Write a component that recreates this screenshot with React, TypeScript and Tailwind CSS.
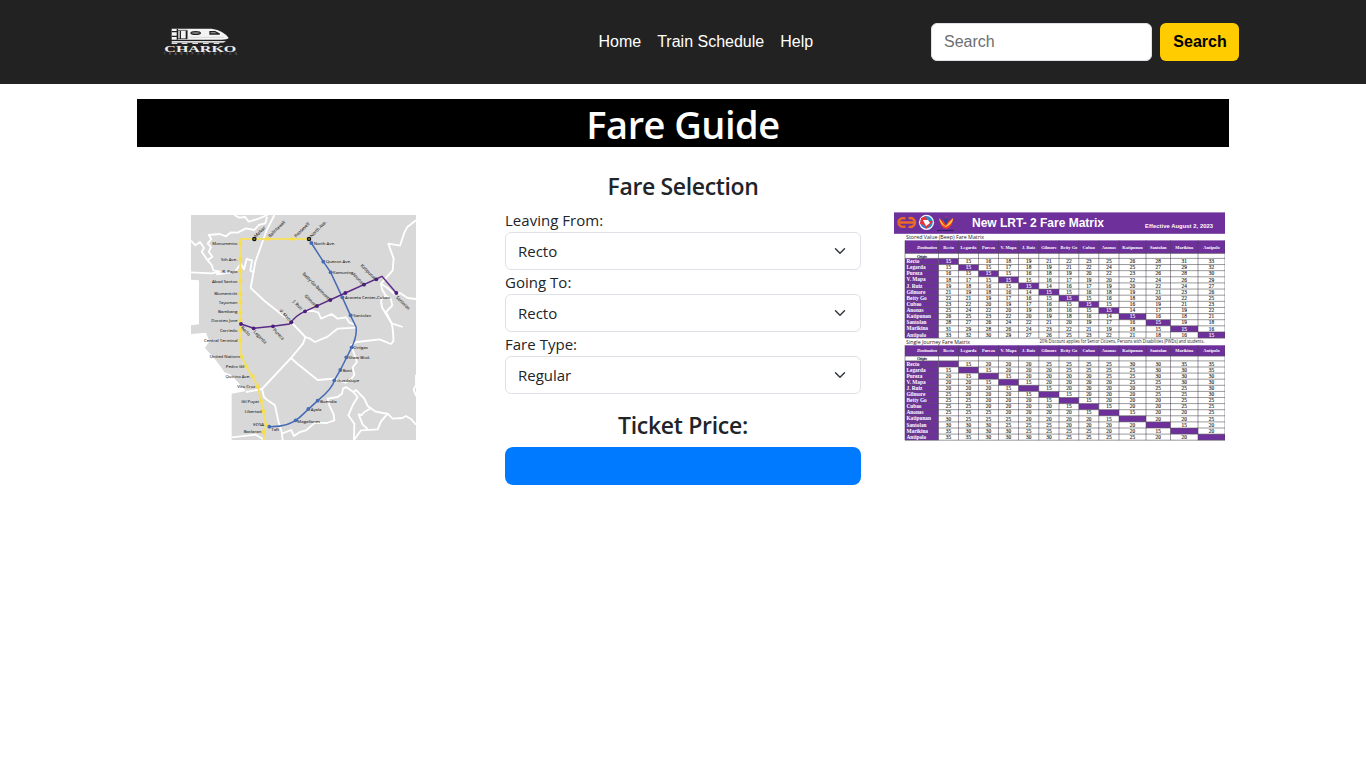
import React from "react";

const stations = ["Recto", "Legarda", "Pureza", "V. Mapa", "J. Ruiz", "Gilmore", "Betty Go", "Cubao", "Anonas", "Katipunan", "Santolan", "Marikina", "Antipolo"];

const storedValue = [
  [15, 15, 16, 18, 19, 21, 22, 23, 25, 26, 28, 31, 33],
  [15, 15, 15, 17, 18, 19, 21, 22, 24, 25, 27, 29, 32],
  [16, 15, 15, 15, 16, 18, 19, 20, 22, 23, 26, 28, 30],
  [18, 17, 15, 15, 15, 16, 17, 19, 20, 22, 24, 26, 29],
  [19, 18, 16, 15, 15, 14, 16, 17, 19, 20, 22, 24, 27],
  [21, 19, 18, 16, 14, 15, 15, 16, 18, 19, 21, 23, 26],
  [22, 21, 19, 17, 16, 15, 15, 15, 16, 18, 20, 22, 25],
  [23, 22, 20, 19, 17, 16, 15, 15, 15, 16, 19, 21, 23],
  [25, 24, 22, 20, 19, 18, 16, 15, 15, 14, 17, 19, 22],
  [26, 25, 23, 22, 20, 19, 18, 16, 14, 15, 16, 18, 21],
  [28, 27, 26, 24, 22, 21, 20, 19, 17, 16, 15, 19, 18],
  [31, 29, 28, 26, 24, 23, 22, 21, 19, 18, 15, 15, 16],
  [33, 32, 30, 29, 27, 26, 25, 23, 22, 21, 18, 16, 15],
];

const singleJourney = [
  [0, 15, 20, 20, 20, 25, 25, 25, 25, 30, 30, 35, 35],
  [15, 0, 15, 20, 20, 20, 25, 25, 25, 25, 30, 30, 35],
  [20, 15, 0, 15, 20, 20, 20, 20, 25, 25, 30, 30, 30],
  [20, 20, 15, 0, 15, 20, 20, 20, 20, 25, 25, 30, 30],
  [20, 20, 20, 15, 0, 15, 20, 20, 20, 20, 25, 25, 30],
  [25, 20, 20, 20, 15, 0, 15, 20, 20, 20, 25, 25, 30],
  [25, 25, 20, 20, 20, 15, 0, 15, 20, 20, 20, 25, 25],
  [25, 25, 20, 20, 20, 20, 15, 0, 15, 20, 20, 25, 25],
  [25, 25, 25, 20, 20, 20, 20, 15, 0, 15, 20, 20, 25],
  [30, 25, 25, 25, 20, 20, 20, 20, 15, 0, 20, 20, 25],
  [30, 30, 30, 25, 25, 25, 20, 20, 20, 20, 0, 15, 20],
  [35, 30, 30, 30, 25, 25, 25, 25, 20, 20, 15, 0, 20],
  [35, 35, 30, 30, 30, 30, 25, 25, 25, 25, 20, 20, 0],
];

const edges = [905, 938.5, 958.5, 978.5, 998.5, 1018.5, 1038.8, 1059, 1078.8, 1098.8, 1119, 1146, 1170.5, 1198, 1225];

function Logo() {
  return (
    <svg className="h-[30px] w-[75px]" viewBox="39 38 225 90" aria-label="Charko Transportation">
      <path d="M65 43H185Q222 49 236 71Q232 76 214 76H65Z" fill="#f4f4f4" />
      <path d="M65 52H84M65 66H84M91 49V74M109 49V74M82 44V76" stroke="#222" strokeWidth="4" />
      <path d="M84 48H112V73H84Z" fill="none" stroke="#222" strokeWidth="2" />
      <ellipse cx="137" cy="56" rx="14" ry="4" fill="#999" stroke="#222" strokeWidth="4" />
      <path d="M180 52H195L209 59H180Z" fill="#aaa" stroke="#222" strokeWidth="4" />
      <path d="M112 69H222" stroke="#ccc" strokeWidth="2" />
      <path d="M65 80H228L220 85H65Z" fill="#ddd" />
      <path d="M65 87H82M95 87H112M127 87H144M159 87H176M191 87H208" stroke="#ddd" strokeWidth="4" />
      <text x="43" y="112" textLength="216" lengthAdjust="spacingAndGlyphs" fontFamily="Liberation Serif, serif" fontWeight="700" fontSize="25" fill="#eee">CHARKO</text>
      <text x="41" y="122" textLength="220" fontFamily="Liberation Sans, sans-serif" fontSize="8" fill="#888">TRANSPORTATION</text>
    </svg>
  );
}

type Label = [string, number, number];
type Tilted = [string, number, number, number];

const westLabels: Label[] = [
  ["Monumento", 154, 104], ["5th Ave.", 154, 152], ["R. Papa", 154, 190], ["Abad Santos", 154, 218], ["Blumentritt", 154, 255],
  ["Tayuman", 154, 282], ["Bambang", 154, 309], ["Doroteo Jose", 154, 336], ["Carriedo", 154, 366], ["Central Terminal", 155, 397],
  ["United Nations", 162, 444], ["Pedro Gil", 175, 474], ["Quirino Ave.", 193, 504], ["Vito Cruz", 208, 534], ["Gil Puyat", 219, 578],
  ["Libertad", 227, 608], ["EDSA", 234, 649], ["Baclaran", 226, 670],
];
const eastLabels: Label[] = [
  ["North Ave.", 383, 104], ["Quezon Ave.", 419, 159], ["Kamuning", 441, 192], ["Araneta Center-Cubao", 477, 266], ["Santolan", 502, 321],
  ["Ortigas", 502, 418], ["Shaw Blvd.", 487, 447], ["Boni", 470, 485], ["Guadalupe", 453, 516], ["Buendia", 402, 579],
  ["Ayala", 374, 604], ["Magallanes", 334, 639], ["Taft", 256, 664],
];
const tiltedLabels: Tilted[] = [
  ["Malvar", 210, 83, -45], ["Balintawak", 252, 83, -45], ["Roosevelt", 330, 83, -45], ["North Ave.", 377, 83, -45],
  ["Recto", 164, 354, 45], ["Legarda", 202, 367, 45], ["Pureza", 260, 361, 45],
  ["V. Mapa", 279, 304, 45], ["J. Ruiz", 320, 276, 45], ["Gilmore", 355, 259, 45], ["Betty Go-Belmonte", 349, 193, 45],
  ["Anonas", 498, 194, 45], ["Katipunan", 523, 168, 45], ["Santolan", 629, 263, 45],
];
const yellowStops = [[163, 99], [163, 147], [163, 184], [163, 212], [163, 251], [163, 276], [163, 307], [163, 332], [163, 361], [163, 392], [168, 440], [181, 469], [200, 499], [216, 530], [225, 573], [232, 604], [242, 645], [233, 666], [245, 87], [319, 87]];
const blueStops = [[376, 99], [412, 155], [434, 187], [469, 262], [494, 316], [497, 412], [481, 442], [463, 480], [445, 511], [395, 572], [367, 597], [329, 631], [250, 650]];
const purpleStops = [[165, 342], [203, 355], [261, 349], [316, 337], [357, 304], [393, 288], [433, 270], [478, 249], [534, 224], [571, 208], [631, 249]];

function RailMap() {
  return (
    <svg className="h-[225px] w-[225px]" viewBox="15 15 675 675" aria-label="Rail network map">
      <rect x="15" y="15" width="675" height="675" fill="#d8d8d8" />
      <g transform="translate(15 6)">
        <path d="M0 203L24 205V337L0 340ZM0 366L45 362L55 388L42 408L75 445L100 480L120 488L165 537L122 545V684H0Z" fill="#fff" />
        <g fill="none" stroke="#fff" strokeWidth="5.5" strokeLinejoin="round">
          <path d="M130 9L145 17L163 15L173 29L200 21L230 9M228 14L223 34L203 39L190 54L165 49L140 62L120 61L105 73L86 66L53 69L61 81L50 94L60 106L53 119L64 134L50 145L62 159L67 175L86 179L78 187L120 181" />
          <path d="M0 86L13 100L27 90L39 108L32 119L50 145M0 181L62 184L86 179M134 176L149 155L159 172L167 141L183 145L178 176L190 182" />
          <path d="M250 9L226 57L193 150L179 228L222 268L300 330L343 375L336 395L300 438L213 531L165 540" />
          <path d="M343 375L355 379L372 390L410 374L422 364L440 350L497 347M342 297H367L382 302L390 320L422 306L440 320L465 316L475 332L492 337" />
          <path d="M300 438L320 456L380 504L430 500L463 512L480 502L490 488L485 466L498 450L480 399L497 390L565 382L575 386L600 396L607 388V374L605 350L602 334L589 313L573 286L570 265L584 250L573 232L570 215L605 175L608 140L592 95L627 101L640 62L649 45L675 25" />
          <path d="M570 215L590 228L611 247L627 243L650 258L675 261M584 250L600 262L604 280L585 300L602 334L635 345" />
          <path d="M213 531L219 555L230 565L252 580L262 628L272 660L275 684M275 664L300 654L309 672L327 660L345 655L372 632L408 633L430 625L428 607L415 580L410 560L440 555L453 545L456 530L465 525L487 540L500 555L485 580L472 610L490 635L489 684L510 655L560 652L570 628L590 605L605 620L634 618L645 612L661 622L675 638" />
          <path d="M487 540L495 534L520 560L530 582L552 598L575 603L590 605M537 590L520 600L512 609L503 607L515 638L530 651M122 676L195 668L220 684M675 488V520L668 532L675 552" />
        </g>
      </g>
      <path d="M163 87V420Q164 437 181 469L216 530L232 604L239 645L233 690M163 87H367" fill="none" stroke="#f3df69" strokeWidth="6" />
      <path d="M376 99L412 155L434 187L469 262L495 320L510 350Q514 377 497 412L463 480L445 511Q440 535 395 572L340 623Q310 651 250 650" fill="none" stroke="#476bb3" strokeWidth="4.5" />
      <path d="M165 342L203 355L261 349L310 342Q332 314 357 304L478 249L588 199L631 249" fill="none" stroke="#5b2a88" strokeWidth="4.5" />
      <g fill="#f9df42">{yellowStops.map(([x, y], i) => <circle key={i} cx={x} cy={y} r="6" />)}</g>
      <g fill="#476bb3">{blueStops.map(([x, y], i) => <circle key={i} cx={x} cy={y} r="5.8" />)}</g>
      <g fill="#4b1f7c">{purpleStops.map(([x, y], i) => <circle key={i} cx={x} cy={y} r="5.8" />)}</g>
      <g fill="#777b38" stroke="#111" strokeWidth="3.5"><circle cx="205" cy="87" r="5" /><circle cx="369" cy="87" r="5" /></g>
      <g fontFamily="Open Sans, sans-serif" fontSize="13" fill="#333" stroke="#333" strokeWidth=".25">
        {westLabels.map(([name, x, y]) => <text key={name} x={x} y={y} textAnchor="end">{name}</text>)}
        {eastLabels.map(([name, x, y]) => <text key={name} x={x} y={y}>{name}</text>)}
        {tiltedLabels.map(([name, x, y, angle]) => (
          <text key={name} x={x} y={y} transform={`rotate(${angle} ${x} ${y})`}>{name}</text>
        ))}
      </g>
    </svg>
  );
}

function FareTable({ top, header, origin, pitch, fares, diagonal }: { top: number; header: number; origin: number; pitch: number; fares: number[][]; diagonal: boolean }) {
  const start = top + header + origin;
  const bottom = start + pitch * 13;
  const mid = (i: number) => (edges[i] + edges[i + 1]) / 2;
  return (
    <g fontFamily="Liberation Serif, serif" fontSize="5.3" textAnchor="middle">
      <rect x="905" y={top} width="320" height={header} fill="#6e309b" />
      <rect x="905" y={start} width="33.5" height={bottom - start} fill="#6e309b" />
      {stations.map((name, i) => <rect key={name} x={edges[i + 1]} y={start + pitch * i} width={edges[i + 2] - edges[i + 1]} height={pitch} fill="#6e309b" />)}
      <path d={`M905 ${top + header}H1225` + Array.from({ length: 14 }, (_, i) => `M905 ${start + pitch * i}H1225`).join("")} stroke="#555" strokeWidth=".6" />
      <path d={edges.map((x) => `M${x} ${top}V${bottom}`).join("")} stroke="#4c4158" strokeWidth=".55" />
      <text x="927" y={top + header / 2 + 1.6} fill="#fff" fontStyle="italic" fontWeight="700" fontSize="4.6" textLength="20">Destination</text>
      <text x="922" y={start - 0.8} fill="#222" fontStyle="italic" fontWeight="700" fontSize="4.6" textLength="10">Origin</text>
      {stations.map((name, row) => (
        <g key={name}>
          <text x={mid(row + 1)} y={top + header / 2 + 1.6} fill="#fff" fontWeight="700" fontSize="4.4">{name}</text>
          <text x="906.5" y={start + pitch * (row + 0.5) + 1.6} textAnchor="start" fill="#fff" fontWeight="700">{name}</text>
          {fares[row].map((fare, col) => row === col && !diagonal ? null : (
            <text key={col} x={mid(col + 1)} y={start + pitch * (row + 0.5) + 1.7} fill={row === col ? "#fff" : "#222"} stroke={row === col ? "#fff" : "#222"} strokeWidth=".12">{fare}</text>
          ))}
        </g>
      ))}
    </g>
  );
}

function FareMatrix() {
  return (
    <svg className="h-[230px] w-[331px]" viewBox="894 212 331 230" aria-label="LRT-2 fare matrix">
      <rect x="894" y="212" width="331" height="230" fill="#fff" />
      <rect x="894" y="212.4" width="331" height="21.4" fill="#6e309b" />
      <g fill="none" stroke="#e96b25" strokeWidth="2.4">
        <path d="M905.5 226.5C901 228 898.5 225 898.5 222.5S901 217 905.5 218.5M908.5 226.5C912.5 228 915 225 915 222.5S912.5 217 908.5 218.5M900 222.5H914" />
      </g>
      <circle cx="926.5" cy="222.3" r="7.6" fill="#eef6ff" />
      <circle cx="926.5" cy="222.3" r="6.2" fill="#2789ce" />
      <path d="M921 218L926 216L927 221L933 221L929 226L926 229L924 225L920 224Z" fill="#ee3037" />
      <path d="M923 220H928L930 223L926 226Z" fill="#fff" />
      <path d="M939 218L943 221L946 216L949 221L953 218Q953 227 946 229Q940 228 939 218Z" fill="#ef3b2d" />
      <path d="M939 218L944 225L946 226L953 218Q953 224 946 227Q940 225 939 218Z" fill="#ffc737" />
      <path d="M943 220L946 217L949 220L946 225Z" fill="#3c3d9b" />
      <path d="M937 230.5H954" stroke="#34206f" strokeWidth="1.2" />
      <g fontFamily="Liberation Sans, sans-serif" fontWeight="700" fill="#fff">
        <text x="972" y="226.5" fontSize="12" textLength="132" lengthAdjust="spacingAndGlyphs">New LRT- 2 Fare Matrix</text>
        <text x="1145" y="228.2" fontSize="5.8" textLength="68">Effective August 2, 2023</text>
      </g>
      <g fontFamily="Open Sans, sans-serif" fill="#222">
        <text x="906" y="239" fontSize="6" textLength="78" lengthAdjust="spacingAndGlyphs">Stored Value (Beep) Fare Matrix</text>
        <text x="906" y="343.7" fontSize="6" textLength="64" lengthAdjust="spacingAndGlyphs">Single Journey Fare Matrix</text>
        <text x="1039.5" y="343.3" fontSize="4.5" textLength="165" lengthAdjust="spacingAndGlyphs">20% Discount applies for Senior Citizens, Persons with Disabilities (PWDs) and students.</text>
      </g>
      <FareTable top={240.4} header={13} origin={5} pitch={6.13} fares={storedValue} diagonal />
      <FareTable top={345.3} header={10.8} origin={4.8} pitch={6.1} fares={singleJourney} diagonal={false} />
    </svg>
  );
}

function Field({ label, options }: { label: string; options: string[] }) {
  return (
    <label className="block h-[62px]">
      <span className="block h-6 text-[15px] leading-6 tracking-[0.02px]">{label}</span>
      <span className="grid h-[38px] items-center">
        <select className="col-start-1 row-start-1 h-[38px] w-full appearance-none rounded-md border border-[#dee2e6] bg-white px-3 text-[15px] leading-6 text-[#212529] tracking-[-0.02px]">
          {options.map((option) => <option key={option}>{option}</option>)}
        </select>
        <svg className="pointer-events-none col-start-1 row-start-1 mr-[15px] h-3 w-3 justify-self-end" viewBox="0 0 16 16" fill="none" stroke="#343a40" strokeWidth="2" strokeLinecap="round" strokeLinejoin="round">
          <path d="m2 5 6 6 6-6" />
        </svg>
      </span>
    </label>
  );
}

export default function App() {
  return (
    <div className="min-h-screen bg-white font-['Open_Sans',sans-serif] text-[#212529]">
      <header className="flex h-[84px] items-center bg-[#222] pl-[163px] pr-[127px] font-['Liberation_Sans',Arial,sans-serif] text-base">
        <Logo />
        <nav className="ml-[360.5px] flex gap-4 whitespace-nowrap text-white">
          <a href="#">Home</a>
          <a href="#">Train Schedule</a>
          <a href="#">Help</a>
        </nav>
        <form className="ml-auto flex gap-2">
          <input className="h-[38px] w-[221px] rounded-md border border-[#dee2e6] bg-white px-3 placeholder:text-[#6b6e71]" placeholder="Search" />
          <button type="button" className="h-[38px] w-[79px] rounded-md bg-[#fc0] pl-px font-bold text-black">Search</button>
        </form>
      </header>
      <main>
        <h1 className="mx-auto mt-[15px] h-12 w-[1092px] bg-black text-center text-[38px] font-semibold leading-[50px] tracking-[-0.5px] text-white">Fare Guide</h1>
        <div className="mx-auto grid w-[1140px] grid-cols-3 pt-6">
          <div className="flex justify-center pt-11"><RailMap /></div>
          <section className="px-3">
            <h2 className="mb-2 h-[29px] text-center text-[23px] font-semibold leading-[31px] tracking-[-0.35px]">Fare Selection</h2>
            <Field label="Leaving From:" options={stations} />
            <Field label="Going To:" options={stations} />
            <Field label="Fare Type:" options={["Regular", "Discounted"]} />
            <h2 className="mb-2 mt-4 h-[29px] text-center text-[23px] font-semibold leading-[31px] tracking-[-0.3px]">Ticket Price:</h2>
            <button type="button" aria-label="Ticket price" className="block h-[38px] w-full rounded-lg bg-[#007bff]" />
          </section>
          <div className="pl-[21px] pt-[41px]"><FareMatrix /></div>
        </div>
      </main>
    </div>
  );
}
